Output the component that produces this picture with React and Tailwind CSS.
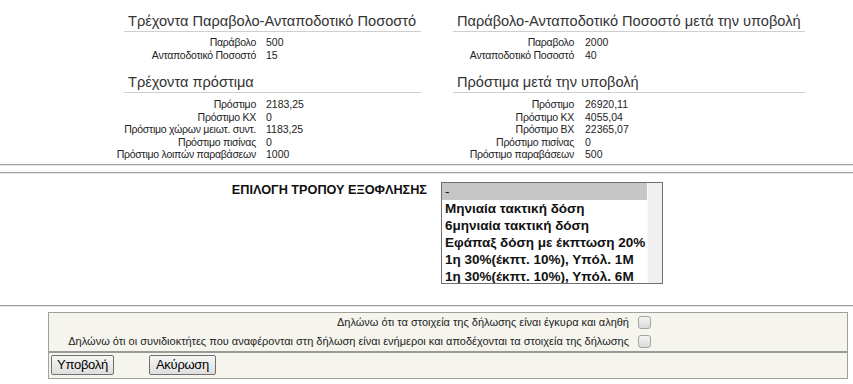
import React from "react";

const currentFees = [
  ["Παράβολο", "500"],
  ["Ανταποδοτικό Ποσοστό", "15"],
];
const currentFines = [
  ["Πρόστιμο", "2183,25"],
  ["Πρόστιμο ΚΧ", "0"],
  ["Πρόστιμο χώρων μειωτ. συντ.", "1183,25"],
  ["Πρόστιμο πισίνας", "0"],
  ["Πρόστιμο λοιπών παραβάσεων", "1000"],
];
const afterFees = [
  ["Παραβολο", "2000"],
  ["Ανταποδοτικό Ποσοστό", "40"],
];
const afterFines = [
  ["Πρόστιμο", "26920,11"],
  ["Πρόστιμο ΚΧ", "4055,04"],
  ["Πρόστιμο ΒΧ", "22365,07"],
  ["Πρόστιμο πισίνας", "0"],
  ["Πρόστιμο παραβάσεων", "500"],
];

const options = [
  "-",
  "Μηνιαία τακτική δόση",
  "6μηνιαία τακτική δόση",
  "Εφάπαξ δόση με έκπτωση 20%",
  "1η 30%(έκπτ. 10%), Υπόλ. 1Μ",
  "1η 30%(έκπτ. 10%), Υπόλ. 6Μ",
];

const Heading = ({ children, className }) => (
  <div className={`whitespace-nowrap border-b border-[#cfcfcf] pl-[4px] text-[14.6px] leading-[20px] text-[#333] ${className}`}>
    {children}
  </div>
);

const Rows = ({ rows, cols, className }) => (
  <div className={`grid ${cols} whitespace-nowrap text-[10.5px] leading-[12.5px] text-[#222] ${className}`}>
    {rows.map(([label, value]) => (
      <React.Fragment key={label}>
        <span className="text-right tracking-[-0.25px]">{label}</span>
        <span>{value}</span>
      </React.Fragment>
    ))}
  </div>
);

const Rule = () => <div className="h-[2px] border-t border-[#a0a0a0] border-b border-b-[#e6e6e6]" />;

const CheckBox = () => (
  <span className="block h-[13px] w-[13px] rounded-[3px] border border-[#a5a5a5] bg-gradient-to-b from-[#f4f4f4] to-[#dadada]" />
);

const Button = ({ children, className }) => (
  <button className={`h-[20px] rounded-[2px] border border-[#707070] bg-gradient-to-b from-[#f6f6f6] to-[#dedede] text-[13px] leading-[18px] tracking-[-0.3px] text-black ${className}`}>
    {children}
  </button>
);

export default function App() {
  return (
    <div className="h-[384px] w-[853px] overflow-hidden bg-white font-['Liberation_Sans',sans-serif]">
      <div className="flex pt-[11px]">
        <div className="w-[440px] pl-[100px]">
          <Heading className="ml-[24px] w-[297px]">Τρέχοντα Παραβολο-Ανταποδοτικό Ποσοστό</Heading>
          <Rows rows={currentFees} cols="grid-cols-[156px_auto] gap-x-[10px]" className="mt-[4px]" />
          <Heading className="ml-[24px] mt-[11px] w-[297px]">Τρέχοντα πρόστιμα</Heading>
          <Rows rows={currentFines} cols="grid-cols-[156px_auto] gap-x-[10px]" className="mt-[5px]" />
        </div>
        <div className="w-[413px]">
          <Heading className="ml-[13px] w-[352px]">Παράβολο-Ανταποδοτικό Ποσοστό μετά την υποβολή</Heading>
          <Rows rows={afterFees} cols="grid-cols-[134px_auto] gap-x-[11px]" className="mt-[4px]" />
          <Heading className="ml-[13px] mt-[11px] w-[352px]">Πρόστιμα μετά την υποβολή</Heading>
          <Rows rows={afterFines} cols="grid-cols-[134px_auto] gap-x-[11px]" className="mt-[5px]" />
        </div>
      </div>

      <div className="mt-[3px]">
        <Rule />
      </div>
      <div className="mt-[6px]">
        <Rule />
      </div>

      <div className="mt-[8px] flex items-start">
        <div className="w-[427px] pt-[1px] text-right text-[12.7px] font-bold leading-[14px] text-[#111]">
          ΕΠΙΛΟΓΗ ΤΡΟΠΟΥ ΕΞΟΦΛΗΣΗΣ
        </div>
        <div className="ml-[14px] flex h-[102px] w-[222px] overflow-hidden border border-[#6f6f6f]">
          <div className="flex-1">
            {options.map((opt, i) => (
              <div
                key={opt}
                className={`h-[17px] whitespace-nowrap pl-[3px] text-[13.5px] font-bold leading-[17px] text-[#111] ${i === 0 ? "bg-[#c6c6c6] font-normal" : ""}`}
              >
                {opt}
              </div>
            ))}
          </div>
          <div className="w-[15px] border-l border-[#fafafa] bg-[#efefef]" />
        </div>
      </div>

      <div className="mt-[21px]">
        <Rule />
      </div>

      <div className="ml-[48px] mt-[5px] w-[800px] border border-[#a0a0a0] bg-[#f5f5ee] text-[11px] text-[#222]">
        <div className="flex h-[19px] items-center">
          <span className="w-[583px] whitespace-nowrap pr-[3px] text-right">Δηλώνω ότι τα στοιχεία της δήλωσης είναι έγκυρα και αληθή</span>
          <span className="ml-[6px]"><CheckBox /></span>
        </div>
        <div className="flex h-[19px] items-center">
          <span className="w-[583px] whitespace-nowrap pr-[3px] text-right">
            Δηλώνω ότι οι συνιδιοκτήτες που αναφέρονται στη δήλωση είναι ενήμεροι και αποδέχονται τα στοιχεία της δήλωσης
          </span>
          <span className="ml-[6px]"><CheckBox /></span>
        </div>
        <div className="border-t-2 border-[#9a9a9a]" />
        <div className="flex h-[25px] items-center pl-[2px]">
          <Button className="w-[63px]">Υποβολή</Button>
          <Button className="ml-[35px] w-[67px]">Ακύρωση</Button>
        </div>
      </div>
    </div>
  );
}
